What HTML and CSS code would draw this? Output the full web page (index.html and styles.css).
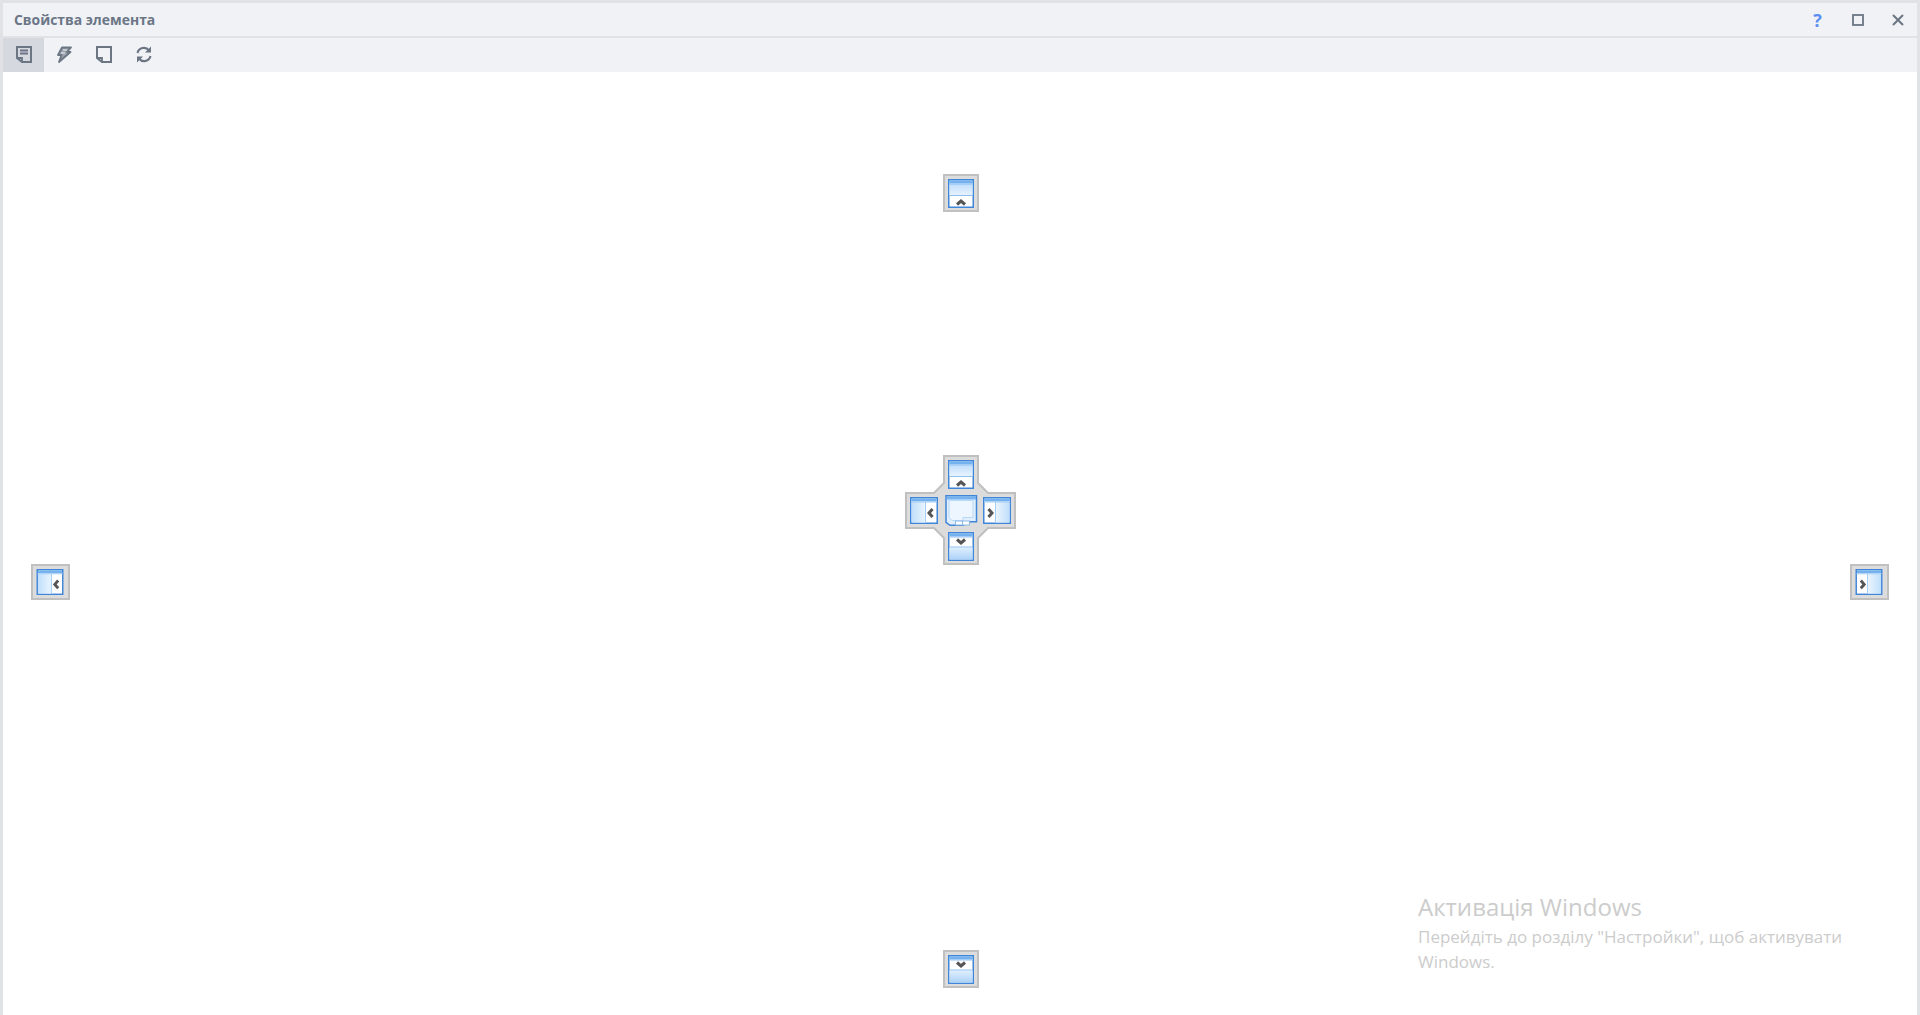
FILE: index.html
```html
<!DOCTYPE html>
<html lang="uk">
<head>
<meta charset="utf-8">
<title>Свойства элемента</title>
<link rel="stylesheet" href="styles.css">
</head>
<body>
<svg class="defs" width="0" height="0" aria-hidden="true">
  <defs>
    <linearGradient id="gv" x1="0" y1="0" x2="0" y2="1"><stop offset="0" stop-color="#c0dffb"/><stop offset="1" stop-color="#e6f2fe"/></linearGradient>
    <linearGradient id="gvr" x1="0" y1="1" x2="0" y2="0"><stop offset="0" stop-color="#acd2f8"/><stop offset="1" stop-color="#e0effd"/></linearGradient>
    <linearGradient id="gh" x1="0" y1="0" x2="1" y2="0"><stop offset="0" stop-color="#c0dffb"/><stop offset="1" stop-color="#eaf4fe"/></linearGradient>
    <linearGradient id="ghr" x1="1" y1="0" x2="0" y2="0"><stop offset="0" stop-color="#c0dffb"/><stop offset="1" stop-color="#eaf4fe"/></linearGradient>
    <symbol id="win-up" viewBox="0 0 26 29">
      <rect x=".75" y=".75" width="24.500" height="27.500" fill="#fff" stroke="#3f85d8" stroke-width="1.500"/>
      <rect x="1.500" y="1.500" width="23" height="3" fill="#74b2ef"/>
      <rect x="1.500" y="5" width="23" height="11" fill="url(#gv)"/>
      <path d="M1 5h24M1 16.500h24" stroke="#8fc0f2"/>
      <path d="M9 25.500l4-3.500 4 3.500" fill="none" stroke="#555" stroke-width="3"/>
    </symbol>
    <symbol id="win-down" viewBox="0 0 26 29">
      <rect x=".75" y=".75" width="24.500" height="27.500" fill="#fff" stroke="#3f85d8" stroke-width="1.500"/>
      <rect x="1.500" y="1.500" width="23" height="3" fill="#74b2ef"/>
      <rect x="1.500" y="15.500" width="23" height="12" fill="url(#gvr)"/>
      <path d="M1 5h24M1 15h24" stroke="#8fc0f2"/>
      <path d="M9 7.500l4 3.500 4-3.500" fill="none" stroke="#555" stroke-width="3"/>
    </symbol>
    <symbol id="win-left" viewBox="0 0 28 27">
      <rect x=".75" y=".75" width="26.500" height="25.500" fill="#fff" stroke="#3f85d8" stroke-width="1.500"/>
      <rect x="1.500" y="1.500" width="25" height="3" fill="#74b2ef"/>
      <rect x="1.500" y="5" width="14" height="20.500" fill="url(#gh)"/>
      <path d="M1 5h26M15.500 5v21" stroke="#a5cdf5"/>
      <path d="M22.500 12l-3.500 4 3.500 4" fill="none" stroke="#555" stroke-width="3"/>
    </symbol>
    <symbol id="win-right" viewBox="0 0 28 27">
      <rect x=".75" y=".75" width="26.500" height="25.500" fill="#fff" stroke="#3f85d8" stroke-width="1.500"/>
      <rect x="1.500" y="1.500" width="25" height="3" fill="#74b2ef"/>
      <rect x="13" y="5" width="13.500" height="20.500" fill="url(#ghr)"/>
      <path d="M1 5h26M12.500 5v21" stroke="#a5cdf5"/>
      <path d="M5.500 12l3.500 4-3.500 4" fill="none" stroke="#555" stroke-width="3"/>
    </symbol>
  </defs>
</svg>

<div class="frame">
  <header class="titlebar">
    <span class="title">Свойства элемента</span>
    <div class="win-buttons">
      <button class="win-btn help">?</button>
      <button class="win-btn">
        <svg width="12" height="12" viewBox="0 0 12 12"><rect x="1" y="1" width="10" height="10" fill="none" stroke="#6b7583" stroke-width="1.800"/></svg>
      </button>
      <button class="win-btn">
        <svg width="12" height="12" viewBox="0 0 12 12"><path d="M1 1l10 10M11 1L1 11" fill="none" stroke="#6b7583" stroke-width="2"/></svg>
      </button>
    </div>
  </header>

  <nav class="toolbar">
    <button class="tool active">
      <svg width="16" height="17" viewBox="0 0 16 17"><path d="M1 1h14v15H6l-5-4z" fill="none" stroke="#6b7583" stroke-width="2"/><path d="M4 4.500h8M4 7.500h8" stroke="#6b7583" stroke-width="2"/><path d="M1 12h5v4" fill="none" stroke="#6b7583" stroke-width="1.800"/></svg>
    </button>
    <button class="tool">
      <svg width="16" height="17" viewBox="0 0 16 17"><path d="M6 1.500h9L11 6h3.500L3 16l2.500-7H2z" fill="#9aa2ad" stroke="#6b7583" stroke-width="1.800" stroke-linejoin="round"/><path d="M7 4h4M5 7h4" stroke="#f0f2f6" stroke-width="1.200"/></svg>
    </button>
    <button class="tool">
      <svg width="16" height="17" viewBox="0 0 16 17"><path d="M1 1h14v15H6l-5-4z" fill="none" stroke="#6b7583" stroke-width="2"/><path d="M1 12h5v4" fill="none" stroke="#6b7583" stroke-width="1.800"/></svg>
    </button>
    <button class="tool">
      <svg width="18" height="17" viewBox="0 0 18 17"><path d="M2.500 7A6.500 6.500 0 0 1 14 4.500M15.500 10A6.500 6.500 0 0 1 4 12.500" fill="none" stroke="#6b7583" stroke-width="2.100"/><path d="M16 .5v6h-6zM2 16.500v-6h6z" fill="#6b7583"/></svg>
    </button>
  </nav>

  <main class="canvas">
    <svg class="hint hint-top" width="36" height="38" viewBox="0 0 36 38"><rect class="hint-bg" x="1" y="1" width="34" height="36"/><use href="#win-up" x="5" y="5" width="26" height="29"/></svg>
    <svg class="hint hint-bottom" width="36" height="38" viewBox="0 0 36 38"><rect class="hint-bg" x="1" y="1" width="34" height="36"/><use href="#win-down" x="5" y="5" width="26" height="29"/></svg>
    <svg class="hint hint-left" width="39" height="36" viewBox="0 0 39 36"><rect class="hint-bg" x="1" y="1" width="37" height="34"/><use href="#win-left" x="5" y="5" width="28" height="26"/></svg>
    <svg class="hint hint-right" width="39" height="36" viewBox="0 0 39 36"><rect class="hint-bg" x="1" y="1" width="37" height="34"/><use href="#win-right" x="5" y="5" width="28" height="26"/></svg>

    <svg class="hint hint-cross" width="111" height="110" viewBox="0 0 111 110">
      <path class="hint-bg" d="M39 1h34v27l10 10h27v35H83L73 83v26H39V83L29 73H1V38h28l10-10z"/>
      <use href="#win-up" x="43" y="5" width="26" height="29"/>
      <use href="#win-down" x="43" y="77" width="26" height="29"/>
      <use href="#win-left" x="5" y="42" width="28" height="27"/>
      <use href="#win-right" x="78" y="42" width="28" height="27"/>
      <path d="M41 40.750h30.500v26h-13v3.500H45l-4-3z" fill="#e1effd" stroke="#3f85d8" stroke-width="1.500"/>
      <rect x="41.500" y="41.500" width="29.500" height="3" fill="#74b2ef"/>
      <path d="M44 45.500v17l3 3h11v-3h10v-17z" fill="#edf5fe" stroke="#b8d8f8"/>
      <rect x="50.500" y="66" width="7" height="4" fill="#fff" stroke="#8cb8e6"/>
      <rect x="57.500" y="66" width="7" height="4" fill="#fff" stroke="#8cb8e6"/>
    </svg>

    <aside class="watermark">
      <p class="wm-title">Активація Windows</p>
      <p class="wm-text">Перейдіть до розділу "Настройки", щоб активувати Windows.</p>
    </aside>
  </main>
</div>
</body>
</html>
```

FILE: styles.css
```css
* { box-sizing: border-box; }
html, body { margin: 0; height: 100%; overflow: hidden; background: #fff; }
.defs { position: absolute; }

.frame {
  display: flex;
  flex-direction: column;
  height: 1015px;
  border: 3px solid #e0e2e6;
  border-bottom: 0;
  font-family: "Open Sans", "Noto Sans", sans-serif;
}

.titlebar {
  display: flex;
  align-items: center;
  justify-content: space-between;
  height: 35px;
  flex: none;
  padding: 0 0 0 11px;
  background: #f0f2f6;
  border-bottom: 2px solid #e0e2e6;
}
.title { font-size: 13.900px; font-weight: 700; color: #6b7686; }
.win-buttons { display: flex; }
.win-btn {
  width: 40px;
  height: 31px;
  padding: 0 0 0 1px;
  border: 0;
  background: none;
  display: flex;
  align-items: center;
  justify-content: center;
}
.help { font: 700 18px "Open Sans", sans-serif; color: #5a8ff2; }

.toolbar {
  display: flex;
  height: 34px;
  flex: none;
  background: #f0f2f6;
}
.tool {
  width: 40px;
  height: 33px;
  padding: 0;
  border: 0;
  background: none;
  display: flex;
  align-items: center;
  justify-content: center;
}
.tool.active { width: 41px; height: 34px; padding: 0 0 1px; background: #d5d9df; }

.canvas { position: relative; flex: 1; background: #fff; }

/* Dock guides float over the canvas; origin of .canvas is (3,72). */
.hint { position: absolute; display: block; }
.hint-bg { fill: #dcdcdc; stroke: #c0c0c0; stroke-width: 2; }
.hint-top { left: 940px; top: 102px; }
.hint-bottom { left: 940px; top: 878px; }
.hint-left { left: 28px; top: 492px; }
.hint-right { left: 1847px; top: 492px; }
.hint-cross { left: 902px; top: 383px; }

.watermark {
  position: absolute;
  left: 1415px;
  top: 817px;
  width: 440px;
  color: #cccccc;
}
.watermark p { margin: 0; }
.wm-title { font-size: 24px; line-height: 35px; font-weight: 400; }
.wm-text { font-size: 17px; line-height: 25px; font-weight: 400; }
```
